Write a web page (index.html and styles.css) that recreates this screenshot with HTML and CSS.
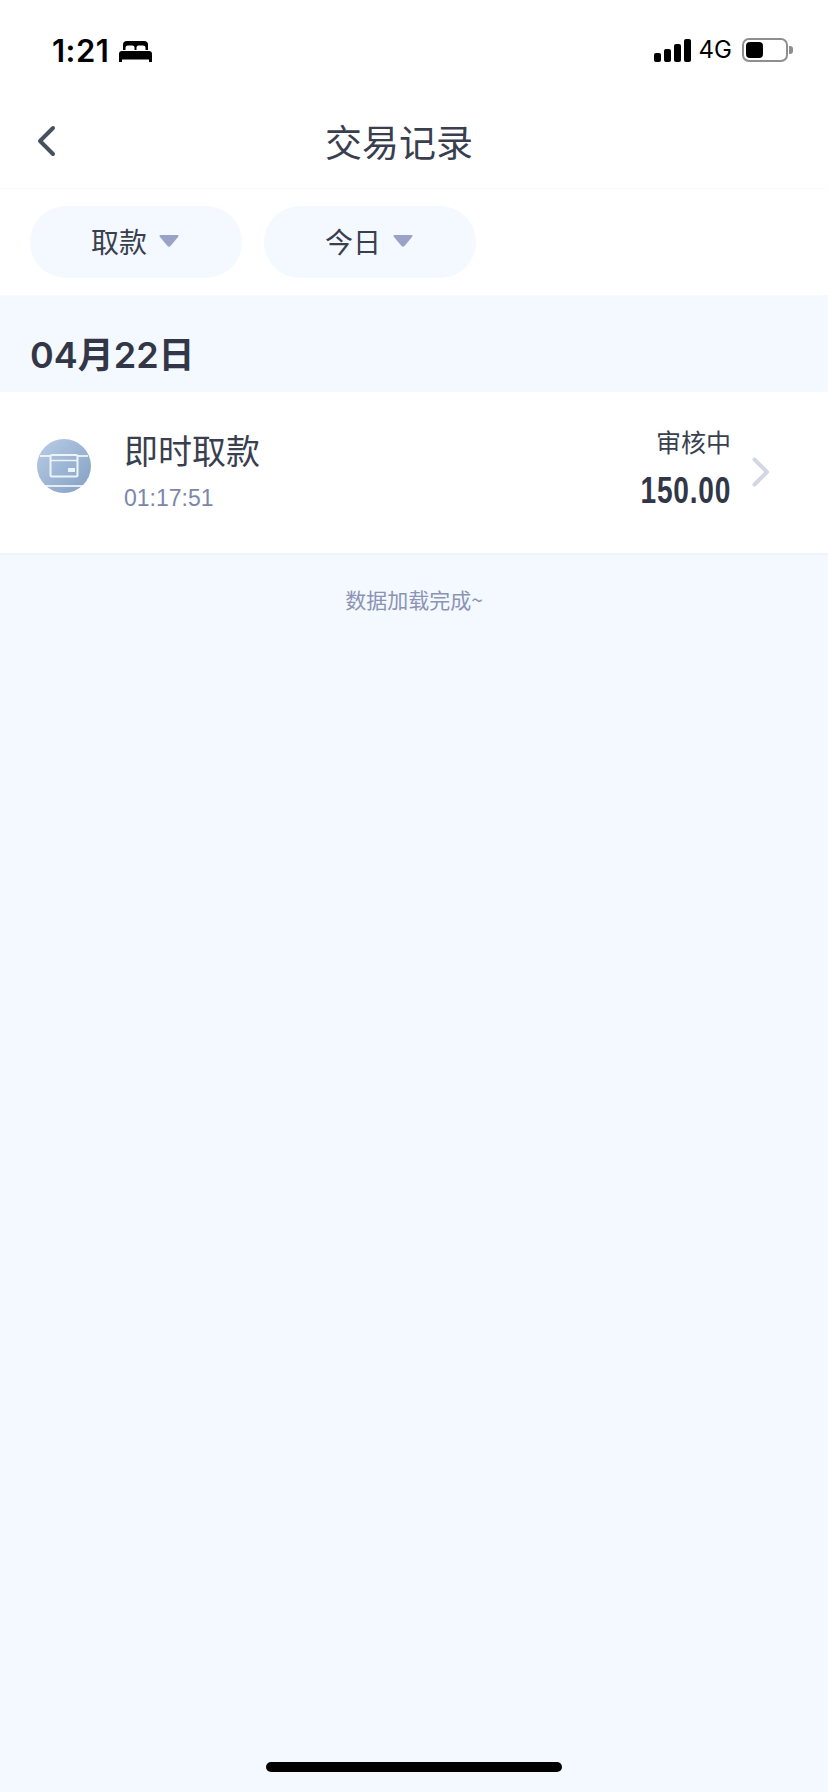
FILE: index.html
```html
<!DOCTYPE html>
<html lang="zh">
<head>
    <meta charset="UTF-8">
    <title>交易记录</title>
    <link rel="stylesheet" href="styles.css">
</head>
<body>
    <div class="page">
        <div class="status-bar">
            <div class="status-left">
                <span class="clock">1:21</span>
                <svg class="bed" width="33" height="22" viewBox="0 0 33 22">
                    <path d="M4 10V4.500Q4 1 8 1H25Q29 1 29 4.500V10H26.500V7.500Q26.500 5.500 24 5.500H19.500Q17.500 5.500 17.500 7.500V10H15.500V7.500Q15.500 5.500 13.500 5.500H9Q6.500 5.500 6.500 7.500V10Z" fill="#000"/>
                    <path d="M3 11H30Q33 11 33 14V22H30V19.500H3V22H0V14Q0 11 3 11Z" fill="#000"/>
                </svg>
            </div>
            <div class="status-right">
                <div class="signal">
                    <i class="bar-1"></i><i class="bar-2"></i><i class="bar-3"></i><i class="bar-4"></i>
                </div>
                <span class="network">4G</span>
                <div class="battery"><div class="battery-level"></div></div>
                <div class="battery-tip"></div>
            </div>
        </div>

        <div class="nav-bar">
            <svg class="back" width="20" height="32" viewBox="0 0 20 32">
                <path d="M17 3L4 16L17 29" fill="none" stroke="#484f60" stroke-width="4" stroke-linecap="round" stroke-linejoin="round"/>
            </svg>
            <h1 class="nav-title">交易记录</h1>
        </div>

        <div class="filters">
            <div class="pill pill-type">取款
                <svg class="caret" width="20" height="12" viewBox="0 0 20 12"><path d="M2 0H18Q20.500 0 19 2L11.500 11Q10 12.500 8.500 11L1 2Q-.5 0 2 0Z" fill="#9aa3c7"/></svg>
            </div>
            <div class="pill pill-date">今日
                <svg class="caret" width="20" height="12" viewBox="0 0 20 12"><path d="M2 0H18Q20.500 0 19 2L11.500 11Q10 12.500 8.500 11L1 2Q-.5 0 2 0Z" fill="#9aa3c7"/></svg>
            </div>
        </div>

        <div class="date-head">04月22日</div>

        <div class="record">
            <svg class="record-icon" width="54" height="54" viewBox="0 0 54 54">
                <defs>
                    <linearGradient id="iconFill" x1="0" y1="0" x2="1" y2="1">
                        <stop offset="0" stop-color="#b9cde6"/>
                        <stop offset="1" stop-color="#829fc3"/>
                    </linearGradient>
                </defs>
                <circle cx="27" cy="27" r="27" fill="url(#iconFill)"/>
                <path d="M3 17H13M41 17H51M4 47H50" stroke="#fff" stroke-width="1.500"/>
                <rect x="13.500" y="16" width="27" height="21.500" rx="1.500" fill="none" stroke="#eef3fa" stroke-width="2"/>
                <path d="M13 21.500H41" stroke="#eef3fa" stroke-width="1.500"/>
                <rect x="31" y="29" width="7" height="4" fill="#eef3fa"/>
            </svg>
            <div class="record-info">
                <div class="record-name">即时取款</div>
                <div class="record-time">01:17:51</div>
            </div>
            <div class="record-side">
                <div class="record-state">审核中</div>
                <div class="record-amount">150.00</div>
            </div>
            <svg class="record-arrow" width="18" height="30" viewBox="0 0 18 30">
                <path d="M2.500 2.500L15 15L2.500 27.500" fill="none" stroke="#d3d7e4" stroke-width="4" stroke-linecap="round" stroke-linejoin="round"/>
            </svg>
        </div>

        <div class="list-end">数据加载完成~</div>

        <div class="home-bar"></div>
    </div>
</body>
</html>
```

FILE: styles.css
```css
* {
    box-sizing: border-box;
}
body {
    margin: 0;
    background-color: #f4f8ff;
    color: #3a3f50;
    font-family: "Noto Sans CJK SC", "Noto Sans", sans-serif;
}
.page {
    display: flex;
    flex-direction: column;
    height: 1792px;
    overflow: hidden;
}
.status-bar {
    display: flex;
    justify-content: space-between;
    align-items: center;
    height: 100px;
    padding: 0 35px 0 52px;
    background-color: #fff;
}
.status-left,
.status-right {
    display: flex;
    align-items: center;
}
.clock {
    font-family: Inter, sans-serif;
    font-size: 31px;
    font-weight: 600;
    letter-spacing: 0.5px;
    line-height: 1;
    color: #000;
}
.bed {
    margin-left: 10px;
    margin-top: 2px;
}
.signal {
    display: flex;
    align-items: flex-end;
    gap: 3px;
    height: 23px;
}
.signal i {
    display: block;
    width: 7px;
    border-radius: 2px;
    background-color: #000;
}
.bar-1 { height: 9px; }
.bar-2 { height: 13px; }
.bar-3 { height: 18px; }
.bar-4 { height: 23px; }
.network {
    margin-left: 8px;
    font-family: Inter, sans-serif;
    font-size: 24px;
    line-height: 1;
    color: #000;
}
.battery {
    width: 46px;
    height: 24px;
    margin-left: 10px;
    padding: 2px;
    border: 2px solid #8e8e8e;
    border-radius: 7px;
}
.battery-level {
    width: 17px;
    height: 100%;
    border-radius: 4px;
    background-color: #000;
}
.battery-tip {
    width: 4px;
    height: 8px;
    margin-left: 1px;
    border-radius: 0 3px 3px 0;
    background-color: #8e8e8e;
}
.nav-bar {
    display: flex;
    align-items: center;
    height: 89px;
    padding: 0 86px 6px 36px;
    background-color: #fff;
    border-bottom: 1px solid #fafbfe;
}
.back {
    flex: none;
}
.nav-title {
    flex: 1;
    margin: 0;
    font-size: 37px;
    font-weight: 400;
    line-height: 50px;
    text-align: center;
}
.filters {
    display: flex;
    gap: 22px;
    height: 106px;
    padding: 17px 30px 0;
    background-color: #fff;
}
.pill {
    display: flex;
    justify-content: center;
    align-items: center;
    gap: 12px;
    width: 212px;
    height: 72px;
    padding: 0 2px 2px 0;
    border-radius: 36px;
    background-color: #f4f8ff;
    font-size: 28px;
}
.date-head {
    height: 97px;
    padding: 35px 30px 0;
    font-family: Inter, "Noto Sans CJK SC", sans-serif;
    font-size: 36px;
    font-weight: 600;
    line-height: 50px;
    color: #323748;
}
.record {
    display: flex;
    align-items: center;
    height: 163px;
    padding: 0 58px 0 37px;
    background-color: #fff;
    border-bottom: 2px solid #f0f3fa;
}
.record-icon {
    flex: none;
    margin-bottom: 14px;
}
.record-info {
    flex: 1;
    margin-left: 33px;
    padding-bottom: 6px;
}
.record-name {
    font-size: 34px;
    line-height: 46px;
}
.record-time {
    margin-top: 10px;
    font-family: "Liberation Sans", sans-serif;
    font-size: 23px;
    line-height: 30px;
    color: #7c86ab;
}
.record-side {
    padding-bottom: 11px;
    text-align: right;
}
.record-state {
    font-size: 25px;
    line-height: 36px;
}
.record-amount {
    margin-top: 12px;
    font-family: "Liberation Sans", sans-serif;
    font-size: 36px;
    font-weight: 700;
    letter-spacing: 1px;
    line-height: 40px;
    color: #323748;
    transform: scaleX(0.78);
    transform-origin: right center;
}
.record-arrow {
    flex: none;
    margin: 0 0 2px 21px;
}
.list-end {
    margin-top: 29px;
    font-size: 21px;
    line-height: 30px;
    text-align: center;
    color: #8b94b5;
}
.home-bar {
    width: 296px;
    height: 10px;
    margin: auto auto 20px;
    border-radius: 5px;
    background-color: #000;
}
```
